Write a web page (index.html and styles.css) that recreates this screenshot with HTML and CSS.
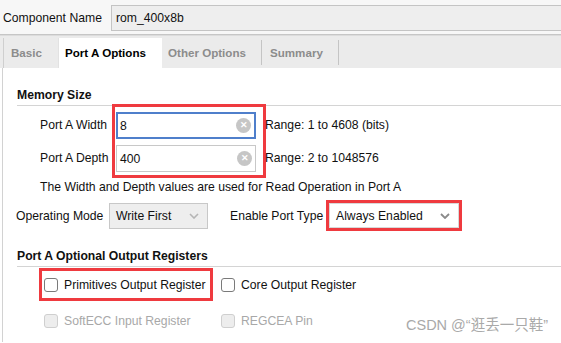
FILE: index.html
```html
<!DOCTYPE html>
<html lang="en">
<head>
    <meta charset="UTF-8">
    <title>Block Memory Generator</title>
    <link rel="stylesheet" href="styles.css">
</head>
<body>
    <div class="header">
        <span class="header-label">Component Name</span>
        <div class="name-box">rom_400x8b</div>
    </div>

    <div class="tabs">
        <div class="tab tab-basic">Basic</div>
        <div class="tab tab-active">Port A Options</div>
        <div class="tab tab-other">Other Options</div>
        <div class="tab tab-summary">Summary</div>
    </div>

    <div class="content">
        <div class="section-title">Memory Size</div>

        <div class="size-grid">
            <div class="size-labels">
                <span>Port A Width</span>
                <span>Port A Depth</span>
            </div>
            <div class="mark size-mark">
                <div class="field field-focus">
                    <span>8</span>
                    <span class="clear">&#10005;</span>
                </div>
                <div class="field">
                    <span>400</span>
                    <span class="clear">&#10005;</span>
                </div>
            </div>
            <div class="size-ranges">
                <span>Range: 1 to 4608 (bits)</span>
                <span>Range: 2 to 1048576</span>
            </div>
        </div>

        <p class="note">The Width and Depth values are used for Read Operation in Port A</p>

        <div class="mode-row">
            <span class="mode-label">Operating Mode</span>
            <div class="select select-grey">
                <span>Write First</span>
                <svg class="chevron" width="10" height="6" viewBox="0 0 10 6"><polyline points="1,1 5,5 9,1" fill="none" stroke="#b5b5b5" stroke-width="1.6"/></svg>
            </div>
            <span class="enable-label">Enable Port Type</span>
            <div class="mark select-mark">
                <div class="select select-white">
                    <span>Always Enabled</span>
                    <svg class="chevron" width="10" height="6" viewBox="0 0 10 6"><polyline points="1,1 5,5 9,1" fill="none" stroke="#8a8a8a" stroke-width="1.8"/></svg>
                </div>
            </div>
        </div>

        <div class="section-title section-two">Port A Optional Output Registers</div>

        <div class="check-row first-row">
            <div class="mark check-mark">
                <span class="box"></span>
                <span>Primitives Output Register</span>
            </div>
            <div class="check">
                <span class="box"></span>
                <span>Core Output Register</span>
            </div>
        </div>

        <div class="check-row disabled">
            <div class="check check-first">
                <span class="box"></span>
                <span>SoftECC Input Register</span>
            </div>
            <div class="check">
                <span class="box"></span>
                <span>REGCEA Pin</span>
            </div>
        </div>
    </div>

    <div class="watermark">CSDN @&ldquo;逛丢一只鞋&rdquo;</div>
</body>
</html>
```

FILE: styles.css
```css
body {
    margin: 0;
    font-family: "Liberation Sans", Arial, "Noto Sans CJK SC", sans-serif;
    font-size: 12.2px;
    color: #111;
    background-color: #fff;
    width: 561px;
    height: 343px;
    overflow: hidden;
    position: relative;
    white-space: nowrap;
}

.header {
    display: flex;
    align-items: flex-start;
    height: 35px;
    padding-top: 5px;
    box-sizing: border-box;
    background-color: #f7f7f7;
    border-bottom: 1px solid #c6c6c6;
}

.header-label {
    flex: none;
    margin-left: 3px;
    width: 108px;
    line-height: 26px;
}

.name-box {
    flex: 1;
    height: 26px;
    line-height: 24px;
    box-sizing: border-box;
    padding-left: 4px;
    background-color: #eeeeee;
    border: 1px solid #c4c4c4;
    border-right: none;
}

.tabs {
    display: flex;
    height: 33px;
    padding-top: 2px;
    box-sizing: border-box;
    background-color: #ebebeb;
    border-top: 1px solid #dcdcdc;
}

.tab {
    flex: none;
    line-height: 29px;
    font-size: 11.6px;
    font-weight: bold;
    color: #8c8c8c;
    box-sizing: border-box;
}

.tab-basic {
    margin-left: 3px;
    width: 55px;
    padding-left: 7px;
    border-left: 1px solid #cfcfcf;
}

.tab-active {
    width: 104px;
    padding-left: 6px;
    color: #000;
    background-color: #fff;
    border-left: 1px solid #e2e2e2;
}

.tab-other {
    width: 100px;
    padding-left: 6px;
    border-right: 1px solid #c4c4c4;
    height: 25px;
    line-height: 25px;
    margin-top: 2px;
}

.tab-summary {
    width: 77px;
    padding-left: 8px;
    border-right: 1px solid #c4c4c4;
    height: 25px;
    line-height: 25px;
    margin-top: 2px;
}

.content {
    margin-left: 2px;
    border-left: 1px solid #d2d2d2;
    padding-top: 19px;
    height: 274px;
    box-sizing: border-box;
}

.section-title {
    margin-left: 14px;
    font-weight: bold;
    line-height: 16px;
    padding-bottom: 2px;
    border-bottom: 1px solid #d4d4d4;
}

.section-two {
    margin-top: 17px;
}

.mark {
    flex: none;
    border: 3px solid #ef3a3f;
}

.size-grid {
    display: flex;
    margin-top: -2px;
}

.size-labels,
.size-ranges {
    display: flex;
    flex-direction: column;
    padding-top: 8px;
    gap: 6px;
}

.size-labels {
    flex: none;
    margin-left: 37px;
    width: 72px;
}

.size-labels span,
.size-ranges span {
    line-height: 27px;
}

.size-ranges {
    margin-left: -1px;
}

.size-mark {
    width: 140px;
    height: 63px;
    overflow: hidden;
    padding: 5px 7px 0 1px;
    display: flex;
    flex-direction: column;
    gap: 6px;
}

.field {
    flex: none;
    display: flex;
    align-items: center;
    justify-content: space-between;
    height: 27px;
    box-sizing: border-box;
    padding: 0 3px 0 3px;
    border: 1px solid #c8c8c8;
    background-color: #fff;
}

.field-focus {
    border: 2px solid #4f7fcb;
    padding-left: 2px;
}

.clear {
    width: 15px;
    height: 15px;
    border-radius: 50%;
    background-color: #c6c6c6;
    color: #fff;
    font-size: 9px;
    font-weight: bold;
    line-height: 15px;
    text-align: center;
}

.note {
    margin: 1px 0 0 37px;
    line-height: 16px;
}

.mode-row {
    display: flex;
    align-items: center;
    margin-top: 5px;
}

.mode-label {
    flex: none;
    margin-left: 13px;
    width: 93px;
}

.select {
    flex: none;
    display: flex;
    align-items: center;
    justify-content: space-between;
    box-sizing: border-box;
}

.select-grey {
    width: 99px;
    height: 26px;
    padding: 0 8px 0 6px;
    background-color: #eeeeee;
    border: 1px solid #c8c8c8;
}

.enable-label {
    flex: none;
    margin-left: 22px;
    width: 96px;
}

.select-mark {
    width: 130px;
    height: 25px;
}

.select-white {
    width: 130px;
    height: 25px;
    padding: 0 8px 0 6px;
    background-color: #fff;
    border: 1px solid #d8d8d8;
}

.check-row {
    display: flex;
    align-items: center;
    margin-left: 36px;
}

.first-row {
    margin-top: 1px;
}

.check-mark {
    display: flex;
    align-items: center;
    gap: 6px;
    width: 166px;
    height: 27px;
    padding-left: 2px;
}

.check {
    flex: none;
    display: flex;
    align-items: center;
    gap: 6px;
    margin-left: 8px;
}

.check-first {
    margin-left: 5px;
    width: 169px;
}

.box {
    flex: none;
    width: 12px;
    height: 12px;
    border: 1px solid #7a7a7a;
    border-radius: 3px;
    background-color: #fff;
}

.disabled {
    margin-top: 13px;
    color: #a8a8a8;
}

.disabled .box {
    border-color: #cfcfcf;
    background-color: #ededed;
}

.watermark {
    position: absolute;
    left: 406px;
    top: 313px;
    font-size: 14.5px;
    color: #a9a9a9;
    font-family: "Liberation Sans", "Noto Sans CJK SC", sans-serif;
}
```
